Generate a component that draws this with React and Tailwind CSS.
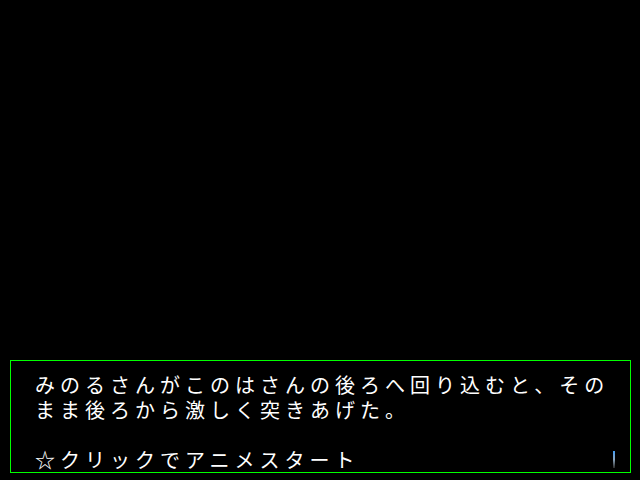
export default function App() {
  return (
    <div className="w-[640px] h-[480px] bg-black pt-[360px] pl-[10px] overflow-hidden">
      <div
        className="relative w-[621px] h-[113px] border border-[#00ff00] pt-[11px] pl-[24px] text-white text-[20px] leading-[25px] tracking-[5px]"
        style={{ fontFamily: '"Noto Sans CJK JP", sans-serif' }}
      >
        <p className="whitespace-nowrap">みのるさんがこのはさんの後ろへ回り込むと、その</p>
        <p className="whitespace-nowrap">まま後ろから激しく突きあげた。</p>
        <p className="h-[25px]"></p>
        <p className="whitespace-nowrap">☆クリックでアニメスタート</p>
        <div className="absolute left-[602px] top-[90px] w-[2px] h-[17px] bg-gradient-to-b from-[#3d9cf5] via-[#8aa4bc] to-[#2a2a2a]"></div>
      </div>
    </div>
  );
}
